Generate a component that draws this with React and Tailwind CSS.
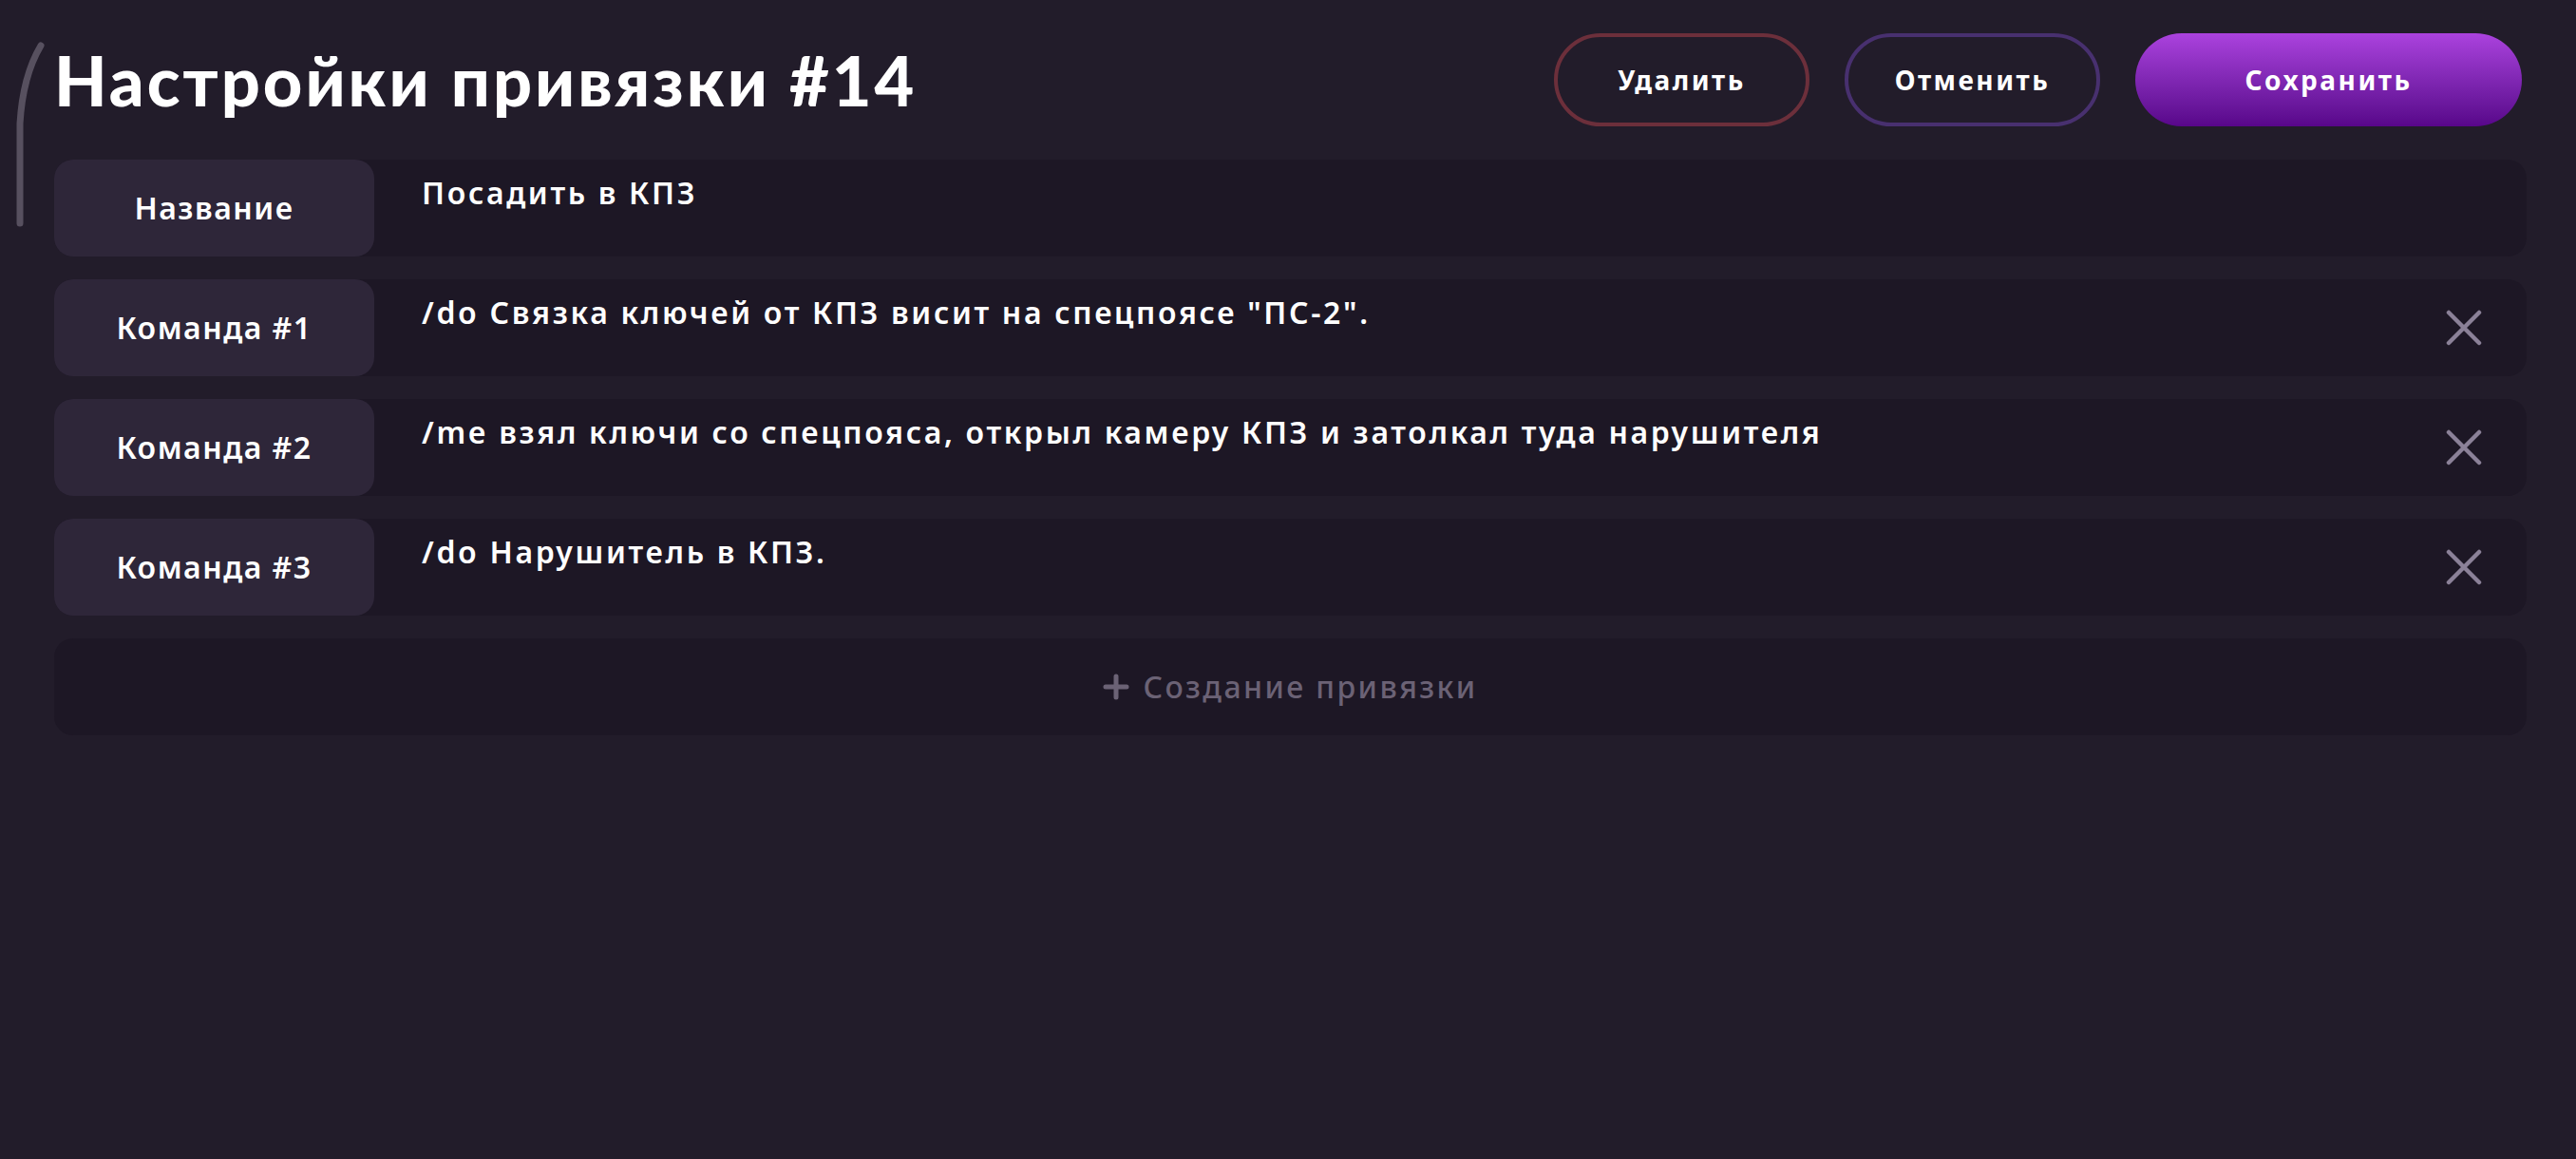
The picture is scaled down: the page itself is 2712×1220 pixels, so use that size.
import React from 'react'

const COMMANDS = [
  '/do Связка ключей от КПЗ висит на спецпоясе "ПС-2".',
  '/me взял ключи со спецпояса, открыл камеру КПЗ и затолкал туда нарушителя',
  '/do Нарушитель в КПЗ.',
]

const font = { fontFamily: '"Noto Sans", "Open Sans", sans-serif' }
const titleFont = { fontFamily: 'Lato, "Noto Sans", sans-serif' }

const CloseIcon = () => (
  <svg width="38" height="38" viewBox="0 0 38 38" fill="none" stroke="#8b8198" strokeWidth="4.5" strokeLinecap="round">
    <path d="M3 3 L35 35 M35 3 L3 35" />
  </svg>
)

const Row = ({ label, value, removable }) => (
  <div className="flex h-[102px] rounded-[20px] bg-[#1d1725]">
    <div className="w-[337px] shrink-0 rounded-[20px] bg-[#2e2639] flex items-center justify-center text-[32px] font-semibold text-white tracking-[1.5px]">
      {label}
    </div>
    <div className="flex-1 pl-[50px] pt-[16px] text-[32px] font-semibold text-white leading-[38px] tracking-[2.65px]">
      {value}
    </div>
    {removable && (
      <div className="flex items-center pr-[47px]">
        <CloseIcon />
      </div>
    )}
  </div>
)

const App = () => {
  return (
    <div className="relative min-h-screen w-full bg-[#221c2a] pl-[57px] pr-[52px] pt-[35px]" style={font}>
      {/* scroll thumb */}
      <svg className="absolute left-0 top-0" width="60" height="260">
        <path d="M43 48 Q24 80 21 130 L21 235" fill="none" stroke="#57505f" strokeWidth="7" strokeLinecap="round" />
      </svg>

      <header className="flex items-center justify-between pr-[5px]">
        <h1 className="text-[72px] font-black text-white leading-none tracking-[3px]" style={titleFont}>
          Настройки привязки #14
        </h1>
        <div className="flex items-center gap-[37px]">
          <button className="w-[269px] h-[98px] rounded-full border-[4px] border-[#6c2f3b] text-white text-[28px] font-bold tracking-[2.5px]">
            Удалить
          </button>
          <button className="w-[269px] h-[98px] rounded-full border-[4px] border-[#48306f] text-white text-[28px] font-bold tracking-[2.5px]">
            Отменить
          </button>
          <button className="w-[407px] h-[98px] rounded-full bg-gradient-to-b from-[#ab42de] to-[#58068a] text-white text-[28px] font-bold tracking-[2.5px]">
            Сохранить
          </button>
        </div>
      </header>

      <main className="mt-[35px] flex flex-col gap-[24px]">
        <Row label="Название" value="Посадить в КПЗ" />
        {COMMANDS.map((c, i) => (
          <Row key={i} label={`Команда #${i + 1}`} value={c} removable />
        ))}
        <div className="h-[102px] rounded-[20px] bg-[#1d1725] flex items-center justify-center gap-[14px] text-[32px] font-medium text-[#6b6275] tracking-[2.4px]">
          <svg width="28" height="28" viewBox="0 0 28 28" fill="none" stroke="#6b6275" strokeWidth="5" strokeLinecap="round">
            <path d="M14 3 V25 M3 14 H25" />
          </svg>
          <span>Создание привязки</span>
        </div>
      </main>
    </div>
  )
}

export default App
